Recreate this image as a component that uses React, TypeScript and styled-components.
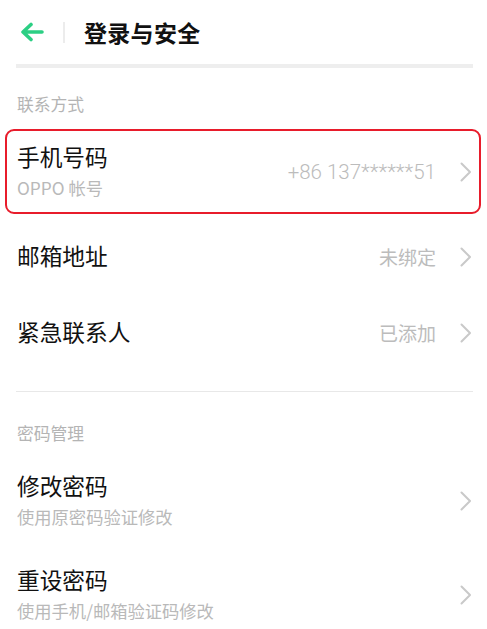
import React from "react";
import styled, { createGlobalStyle } from "styled-components";

const Global = createGlobalStyle`
  html, body { margin: 0; padding: 0; background: #fff; }
  body { font-family: "Noto Sans CJK SC", "Noto Sans", Roboto, sans-serif; -webkit-font-smoothing: antialiased; }
`;

const Page = styled.div`
  width: 487px;
  height: 629px;
  overflow: hidden;
  background: #fff;
`;

const Header = styled.header`
  height: 64px;
  display: flex;
  align-items: center;
  padding-left: 20px;
`;

const BackIcon = styled.svg`
  width: 24px;
  height: 20px;
  flex: none;
`;

const VDivider = styled.div`
  width: 2px;
  height: 21px;
  background: #ececec;
  margin: 0 19px 0 19px;
`;

const Title = styled.h1`
  margin: 0;
  font-size: 23px;
  font-weight: 700;
  color: #111;
  line-height: 30px;
  letter-spacing: 0.3px;
`;

const ThickBar = styled.div`
  height: 4px;
  margin: 0 14px 0 16px;
  background: #eeeeee;
`;

const ThinDivider = styled.div`
  height: 1px;
  margin: 20px 14px 0 16px;
  background: #e8e8e8;
`;

const SectionLabel = styled.div<{ $top: number }>`
  padding: ${(p) => p.$top}px 16px 11px 17px;
  font-size: 16.8px;
  line-height: 20px;
  color: #b4b4b4;
`;

const Row = styled.div<{ $tall?: boolean }>`
  position: relative;
  height: ${(p) => (p.$tall ? 94 : 76)}px;
  display: flex;
  align-items: center;
  padding: 0 15px 0 17px;
  box-sizing: border-box;
`;

const Texts = styled.div`
  flex: 1;
  display: flex;
  flex-direction: column;
  gap: 7px;
  min-width: 0;
  margin-top: -2px;
`;

const RowTitle = styled.div`
  font-size: 22.7px;
  line-height: 26px;
  color: #111;
`;

const RowSub = styled.div`
  font-size: 17.3px;
  line-height: 22px;
  color: #b9b9b9;
`;

const Value = styled.div<{ $latin?: boolean }>`
  font-size: ${(p) => (p.$latin ? 20.5 : 19)}px;
  font-family: ${(p) => (p.$latin ? 'Roboto, "Noto Sans", sans-serif' : 'inherit')};
  font-weight: ${(p) => (p.$latin ? 300 : 400)};
  color: #bcbcbc;
  line-height: 24px;
  margin-right: 24px;
  white-space: nowrap;
`;

const Chevron = styled.svg`
  width: 12px;
  height: 20px;
  flex: none;
`;

const Highlight = styled.div`
  position: absolute;
  left: 5px;
  right: 6px;
  top: 4px;
  bottom: 5px;
  border: 2px solid #e81c2b;
  border-radius: 9px;
  pointer-events: none;
`;

const Arrow = () => (
  <Chevron viewBox="0 0 12 20">
    <path d="M1.5 1.5 L10 10 L1.5 18.5" fill="none" stroke="#c9c9c9" strokeWidth="2" strokeLinecap="round" strokeLinejoin="round" />
  </Chevron>
);

type Item = { title: string; sub?: string; value?: string; latin?: boolean; highlight?: boolean };

const ListRow = ({ title, sub, value, latin, highlight }: Item) => (
  <Row $tall={!!sub}>
    <Texts>
      <RowTitle>{title}</RowTitle>
      {sub && <RowSub>{sub}</RowSub>}
    </Texts>
    {value && <Value $latin={latin}>{value}</Value>}
    <Arrow />
    {highlight && <Highlight />}
  </Row>
);

export default function App() {
  return (
    <Page>
      <Global />
      <Header>
        <BackIcon viewBox="0 0 24 20">
          <path d="M22 10 H4 M11 2.5 L3 10 L11 17.5" fill="none" stroke="#2ccf84" strokeWidth="3.6" strokeLinecap="round" strokeLinejoin="round" />
        </BackIcon>
        <VDivider />
        <Title>登录与安全</Title>
      </Header>
      <ThickBar />
      <SectionLabel $top={26}>联系方式</SectionLabel>
      <ListRow title="手机号码" sub="OPPO 帐号" value="+86 137******51" latin highlight />
      <ListRow title="邮箱地址" value="未绑定" />
      <ListRow title="紧急联系人" value="已添加" />
      <ThinDivider />
      <SectionLabel $top={31}>密码管理</SectionLabel>
      <ListRow title="修改密码" sub="使用原密码验证修改" />
      <ListRow title="重设密码" sub="使用手机/邮箱验证码修改" />
    </Page>
  );
}
